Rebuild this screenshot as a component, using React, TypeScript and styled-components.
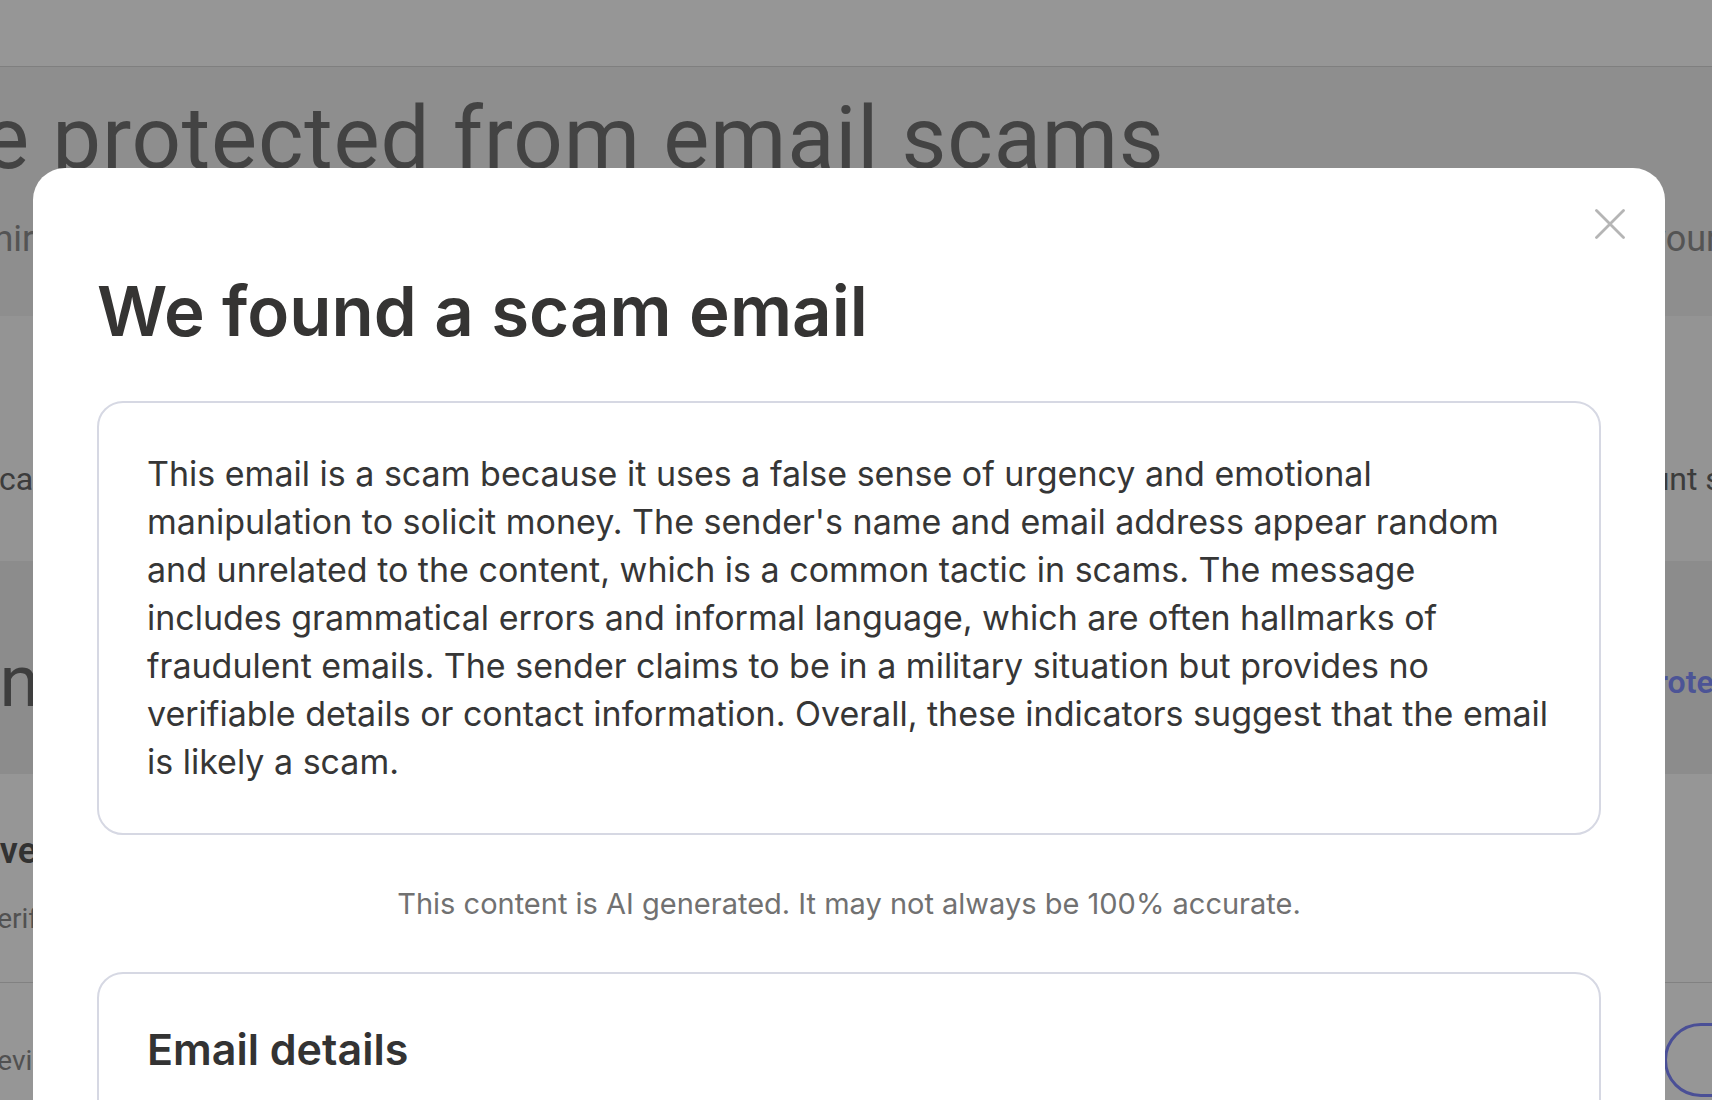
import React from "react";
import styled, { createGlobalStyle } from "styled-components";

const GlobalStyle = createGlobalStyle`
  html, body { margin: 0; padding: 0; height: 100%; overflow: hidden; }
  body { font-family: Roboto, "Liberation Sans", sans-serif; background: #fff; }
  * { box-sizing: border-box; }
`;

/* ---------- page behind the dialog ---------- */

const Page = styled.div`
  width: 1712px;
  height: 1100px;
  overflow: hidden;
  background: #fff;
  color: #666;
`;

const TopBar = styled.header`
  height: 67px;
  background: #fff;
  border-bottom: 1px solid #d9d9d9;
`;

const Content = styled.div`
  margin-left: -20px;
  width: 1900px;
`;

const Band = styled.section<{ $tone: string; $h: number; $pad: number }>`
  background: ${(p) => p.$tone};
  height: ${(p) => p.$h}px;
  padding-top: ${(p) => p.$pad}px;
  display: grid;
  grid-template-columns: 1599px 1fr;
  align-content: start;
  align-items: center;
`;

const Hero = styled.section`
  background: #f2f2f2;
  height: 249px;
  padding-top: 22px;
`;

const HeroTitle = styled.h1`
  margin: 0;
  font-family: Roboto, sans-serif;
  font-weight: 400;
  font-size: 87px;
  line-height: 98px;
  letter-spacing: 0.8px;
  color: #737373;
  white-space: nowrap;
  text-indent: -52px;
`;

const HeroText = styled.p`
  margin: 28px 0 0;
  font-size: 36px;
  line-height: 48px;
  color: #8f8f8f;
  white-space: nowrap;
  text-indent: -8px;
`;

const RowText = styled.p<{ $size: number; $weight?: number; $color?: string }>`
  margin: 0;
  font-size: ${(p) => p.$size}px;
  font-weight: ${(p) => p.$weight ?? 400};
  color: ${(p) => p.$color ?? "#666"};
  white-space: nowrap;
`;

const Stack = styled.div`
  display: flex;
  flex-direction: column;
  gap: 30px;
`;

const SideLink = styled.a`
  margin-left: 57px;
  font-size: 32px;
  font-weight: 600;
  color: #8290ff;
  white-space: nowrap;
`;

const Divider = styled.hr`
  margin: 0;
  border: 0;
  border-top: 1px solid #dcdcdc;
`;

const PillButton = styled.button`
  margin-left: 85px;
  width: 300px;
  height: 74px;
  border: 3px solid #7e86ff;
  border-radius: 37px;
  background: transparent;
`;

/* ---------- dialog ---------- */

const Backdrop = styled.div`
  position: fixed;
  inset: 0;
  background: rgba(0, 0, 0, 0.41);
  padding: 168px 0 0 33px;
  display: flex;
  align-items: flex-start;
`;

const Modal = styled.div`
  position: relative;
  width: 1632px;
  background: #fff;
  border-radius: 32px;
  padding: 101px 64px 64px;
  font-family: Inter, "Noto Sans", sans-serif;
  color: #333;
`;

const CloseButton = styled.button`
  position: absolute;
  top: 41px;
  right: 40px;
  width: 30px;
  height: 30px;
  padding: 0;
  border: 0;
  background: none;
  cursor: pointer;
`;

const Title = styled.h2`
  margin: 0 0 48px;
  font-size: 69px;
  line-height: 84px;
  font-weight: 600;
  color: #353433;
`;

const Card = styled.div`
  border: 2px solid #d6d8e3;
  border-radius: 26px;
  padding: 47px 48px;
`;

const Explanation = styled.p`
  margin: 0;
  font-size: 34px;
  line-height: 48px;
  color: #363636;
  white-space: nowrap;
`;

const Disclaimer = styled.p`
  margin: 48px 0 47px;
  text-align: center;
  font-size: 29px;
  line-height: 42px;
  color: #717171;
`;

const CardTitle = styled.h3`
  margin: 0;
  font-size: 43px;
  line-height: 56px;
  font-weight: 600;
  color: #333;
`;

const DetailList = styled.dl`
  margin: 32px 0 0;
  display: grid;
  grid-template-columns: 200px 1fr;
  row-gap: 16px;
  font-size: 32px;
  line-height: 48px;
`;

const DetailTerm = styled.dt`
  color: #717171;
`;

const DetailValue = styled.dd`
  margin: 0;
  color: #333;
`;

export default function App() {
  return (
    <>
      <GlobalStyle />
      <Page>
        <TopBar />
        <Content>
          <Hero>
            <HeroTitle>Be protected from email scams</HeroTitle>
            <HeroText>Third-party links and attachments can hide scams, so check anything unusual before you click on links in your local inbox</HeroText>
          </Hero>
          <Band $tone="#fbfbfb" $h={245} $pad={144}>
            <RowText $size={32}>Scams can look convincing, so check before you act</RowText>
            <RowText $size={32}>Account settings</RowText>
          </Band>
          <Band $tone="#eeeeee" $h={213} $pad={78}>
            <RowText $size={72} $color="#6a6a6a">In your inbox</RowText>
            <SideLink>Protect my inbox</SideLink>
          </Band>
          <Band $tone="#ffffff" $h={208} $pad={56}>
            <Stack>
              <RowText $size={36} $weight={600} $color="#555">Every email checked in seconds</RowText>
              <RowText $size={28} $color="#8a8a8a">Verify any email before replying</RowText>
            </Stack>
            <span />
          </Band>
          <Divider />
          <Band $tone="#ffffff" $h={200} $pad={40}>
            <RowText $size={28} $color="#8a8a8a">Review your recent checks</RowText>
            <PillButton aria-label="Check an email" />
          </Band>
        </Content>
      </Page>

      <Backdrop>
        <Modal role="dialog" aria-labelledby="scam-title">
          <CloseButton aria-label="Close">
            <svg width="30" height="30" viewBox="0 0 30 30">
              <path d="M1.5 1.5 L28.5 28.5 M28.5 1.5 L1.5 28.5" stroke="#b5b5b5" strokeWidth="2.8" strokeLinecap="round" fill="none" />
            </svg>
          </CloseButton>
          <Title id="scam-title">We found a scam email</Title>
          <Card>
            <Explanation>
              This email is a scam because it uses a false sense of urgency and emotional<br />
              manipulation to solicit money. The sender's name and email address appear random<br />
              and unrelated to the content, which is a common tactic in scams. The message<br />
              includes grammatical errors and informal language, which are often hallmarks of<br />
              fraudulent emails. The sender claims to be in a military situation but provides no<br />
              verifiable details or contact information. Overall, these indicators suggest that the email<br />
              is likely a scam.
            </Explanation>
          </Card>
          <Disclaimer>This content is AI generated. It may not always be 100% accurate.</Disclaimer>
          <Card>
            <CardTitle>Email details</CardTitle>
            <DetailList>
              <DetailTerm>From</DetailTerm>
              <DetailValue>Unknown sender</DetailValue>
              <DetailTerm>Subject</DetailTerm>
              <DetailValue>Urgent request</DetailValue>
            </DetailList>
          </Card>
        </Modal>
      </Backdrop>
    </>
  );
}
